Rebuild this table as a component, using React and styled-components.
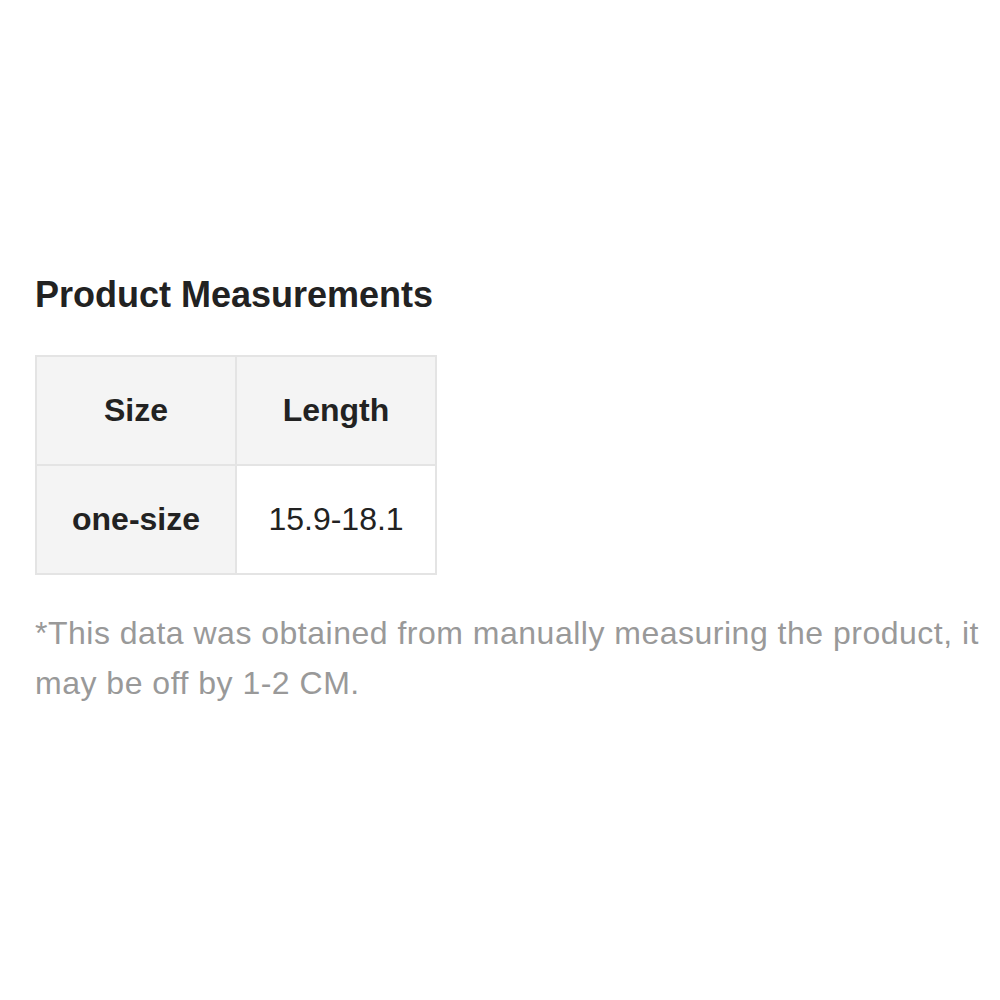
import React from 'react';
import styled, { createGlobalStyle } from 'styled-components';

const GlobalStyle = createGlobalStyle`
  body {
    margin: 0;
    background: #fff;
    font-family: "Liberation Sans", Arial, sans-serif;
  }
`;

const Page = styled.div`
  width: 1000px;
  height: 1000px;
  padding: 275px 10px 0 35px;
  box-sizing: border-box;
`;

const Title = styled.h2`
  margin: 0;
  font-size: 36px;
  line-height: 40px;
  font-weight: 700;
  color: #222;
`;

const Table = styled.table`
  margin-top: 40px;
  border-collapse: collapse;
  border: 2px solid #e4e4e4;
`;

const Cell = styled.td`
  width: 198px;
  height: 107px;
  padding: 0;
  border: 2px solid #e4e4e4;
  background: ${({ $shaded }) => ($shaded ? '#f4f4f4' : '#fff')};
  text-align: center;
  vertical-align: middle;
  font-size: 32px;
  font-weight: ${({ $bold }) => ($bold ? 700 : 400)};
  color: #222;
`;

const Note = styled.p`
  margin: 33px 0 0;
  font-size: 32px;
  letter-spacing: 0.5px;
  line-height: 50px;
  color: #999;
`;

const rows = [
  { label: 'Size', value: 'Length', header: true },
  { label: 'one-size', value: '15.9-18.1', header: false },
];

export default function App() {
  return (
    <>
      <GlobalStyle />
      <Page>
        <Title>Product Measurements</Title>
        <Table>
          <tbody>
            {rows.map((row) => (
              <tr key={row.label}>
                <Cell $shaded $bold>{row.label}</Cell>
                <Cell $shaded={row.header} $bold={row.header}>{row.value}</Cell>
              </tr>
            ))}
          </tbody>
        </Table>
        <Note>
          *This data was obtained from manually measuring the product, it may be off by 1-2 CM.
        </Note>
      </Page>
    </>
  );
}
